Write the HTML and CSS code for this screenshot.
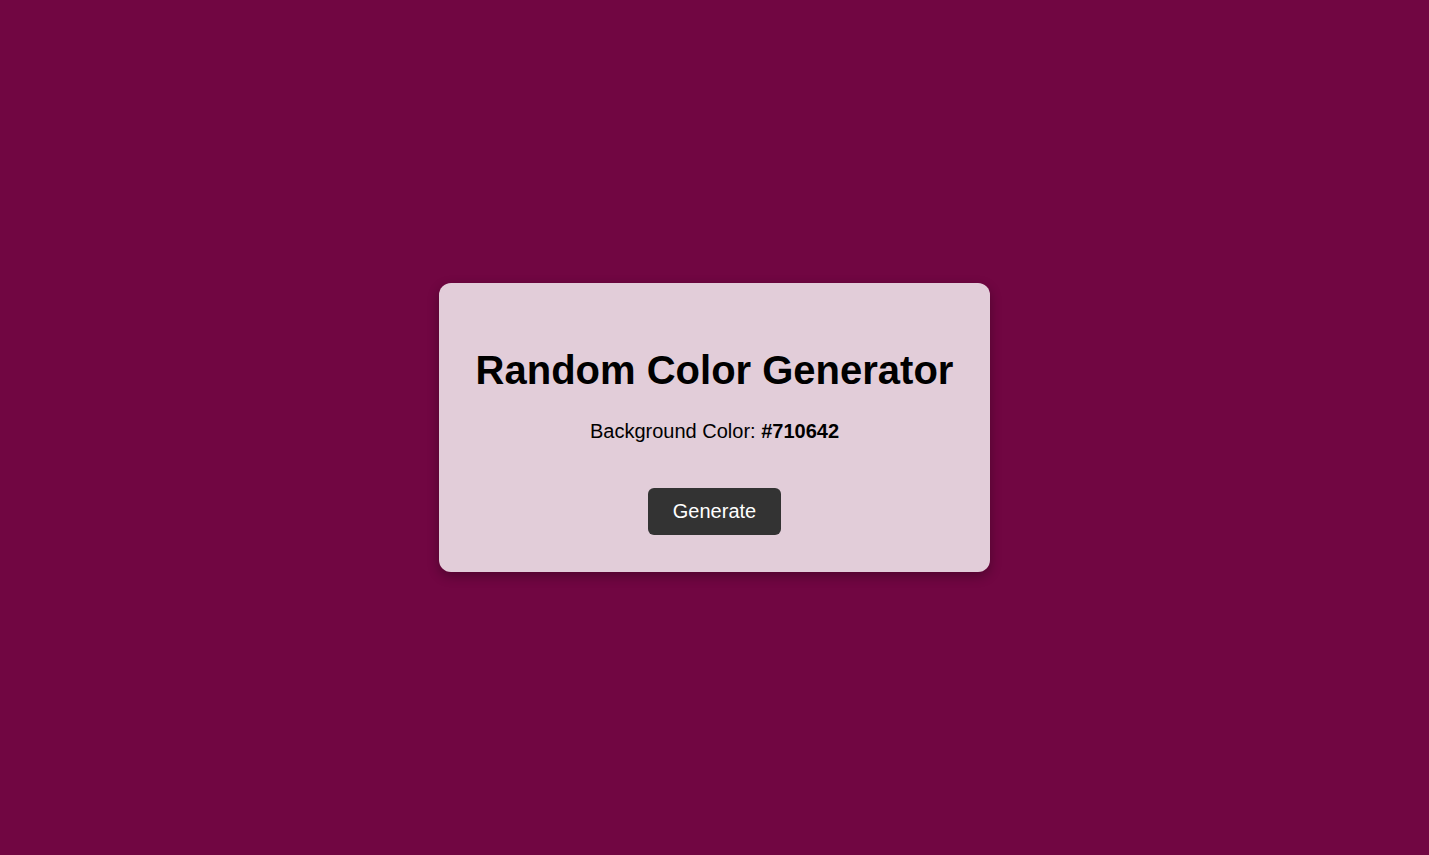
FILE: index.html
```html
<!DOCTYPE html>
<html lang="en">
<head>
<meta charset="utf-8">
<title>Random Color Generator</title>
<link rel="stylesheet" href="styles.css">
</head>
<body class="page">
  <main class="card">
    <h1 class="title">Random Color Generator</h1>
    <p class="color-line">Background Color: <strong class="color-code">#710642</strong></p>
    <div class="actions">
      <button class="generate-btn" type="button">Generate</button>
    </div>
  </main>
</body>
</html>
```

FILE: styles.css
```css
html, body {
  margin: 0;
  padding: 0;
}

.page {
  background: #710642;
  height: 100vh;
  display: flex;
  align-items: center;
  justify-content: center;
  font-family: "Liberation Sans", Arial, sans-serif;
  color: #000;
}

.card {
  background: rgba(255, 255, 255, 0.8);
  border-radius: 12px;
  padding: 37px 37px;
  text-align: center;
  box-shadow: 0 4px 12px rgba(0, 0, 0, 0.3);
}

.title {
  font-size: 40px;
  font-weight: bold;
  margin: 27px 0 27px;
  line-height: 46px;
}

.color-line {
  font-size: 20px;
  line-height: 23px;
  margin: 0 0 45px;
}

.color-code {
  font-weight: bold;
}

.actions {
  display: flex;
  justify-content: center;
}

.generate-btn {
  font-family: "Liberation Sans", Arial, sans-serif;
  font-size: 20px;
  line-height: 23px;
  padding: 12px 25px;
  background: #333;
  color: #fff;
  border: none;
  border-radius: 6px;
  cursor: pointer;
}
```
